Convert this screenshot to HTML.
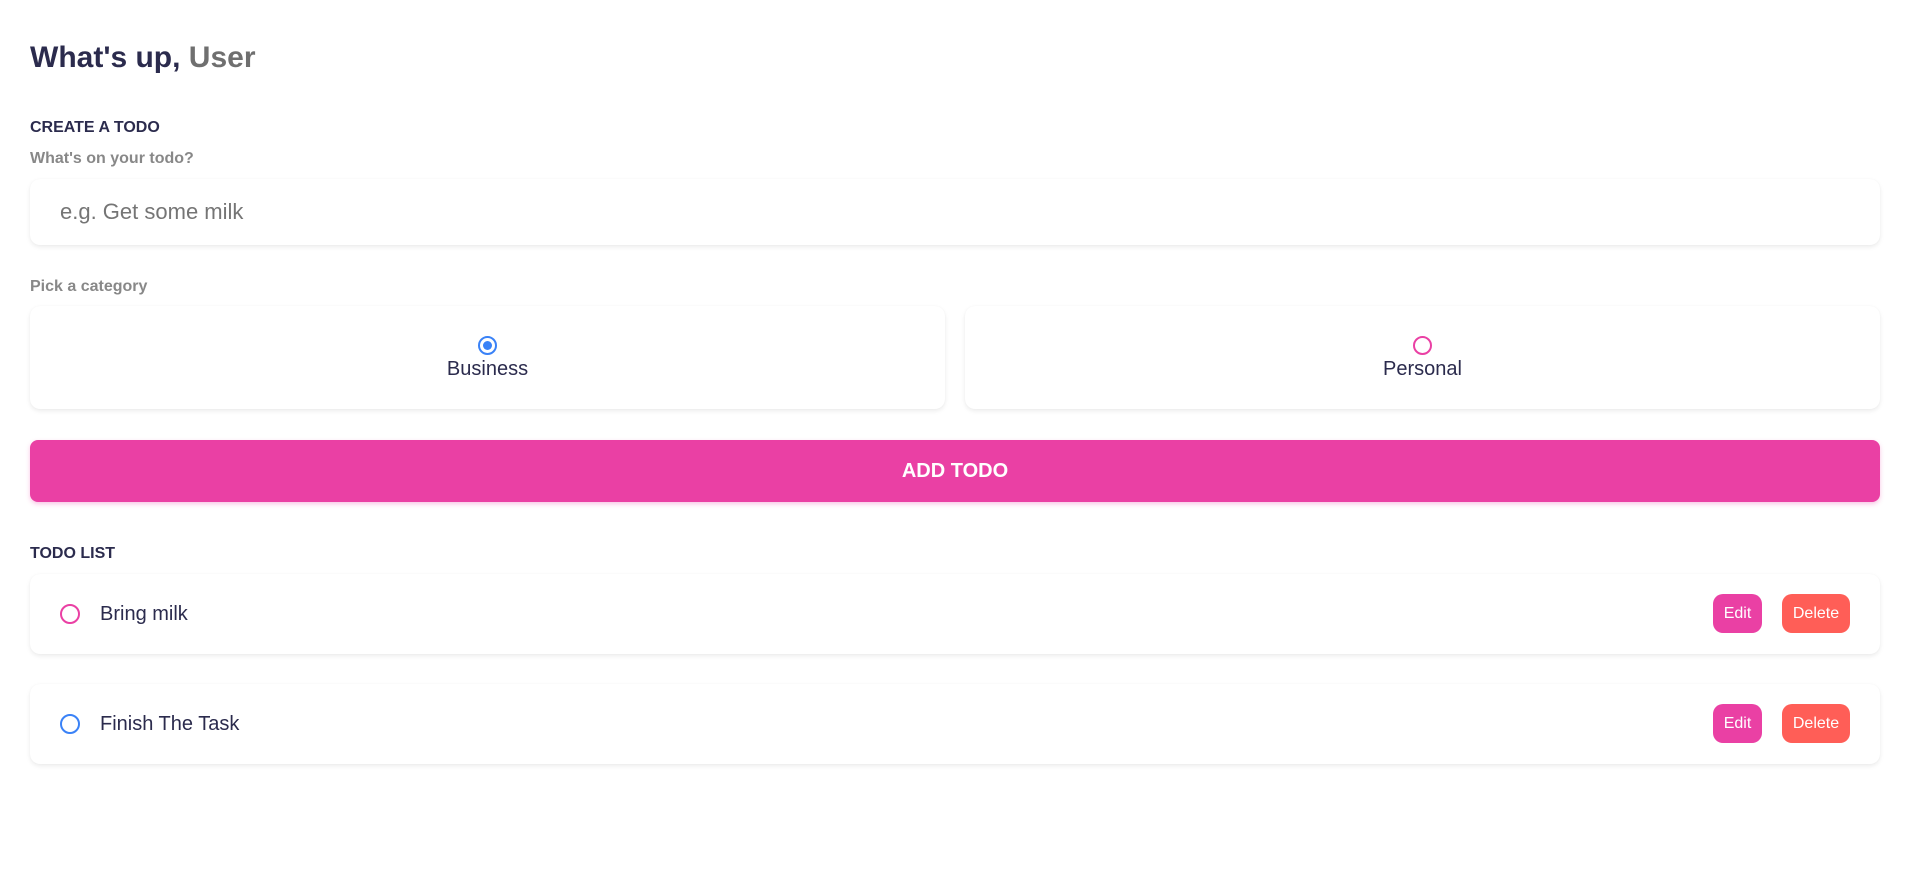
<!DOCTYPE html>
<html><head><meta charset="utf-8"><style>
*{box-sizing:border-box;margin:0;padding:0}
body{width:1910px;height:880px;background:#fff;font-family:"Liberation Sans",sans-serif;color:#2b2b4d;position:relative;overflow:hidden}
.a{position:absolute}
.card{position:absolute;background:#fff;border-radius:10px;box-shadow:0 2px 5px rgba(0,0,0,0.08),0 0 1px rgba(0,0,0,0.05)}
h1{position:absolute;left:30px;top:41px;font-size:30px;font-weight:bold;color:#2b2b4d}
h1 span{color:#6f6f6f;font-weight:bold}
.h{font-size:16px;font-weight:bold;color:#2b2b4d}
.l{font-size:16px;font-weight:bold;color:#888}
.btn{position:absolute;color:#fff;font-size:16px;border-radius:10px;text-align:center;line-height:39px;height:39px;top:20px}
</style></head><body>
<h1>What's up, <span>User</span></h1>
<div class="a h" style="left:30px;top:119px">CREATE A TODO</div>
<div class="a l" style="left:30px;top:150px">What's on your todo?</div>
<div class="card" style="left:30px;top:179px;width:1850px;height:66px"><div class="a" style="left:30px;top:20px;font-size:22px;color:#757575">e.g. Get some milk</div></div>
<div class="a l" style="left:30px;top:278px">Pick a category</div>
<div class="card" style="left:30px;top:306px;width:915px;height:103px">
 <div class="a" style="left:448px;top:30px;width:19px;height:19px;border:2px solid #3a82f7;border-radius:50%"><div style="margin:3px;width:9px;height:9px;border-radius:50%;background:#3a82f7"></div></div>
 <div class="a" style="left:0;width:915px;text-align:center;top:52px;font-size:20px;color:#2b2b4d">Business</div>
</div>
<div class="card" style="left:965px;top:306px;width:915px;height:103px">
 <div class="a" style="left:448px;top:30px;width:19px;height:19px;border:2px solid #ea40a4;border-radius:50%"></div>
 <div class="a" style="left:0;width:915px;text-align:center;top:52px;font-size:20px;color:#2b2b4d">Personal</div>
</div>
<div class="a" style="left:30px;top:440px;width:1850px;height:62px;background:#ea40a4;border-radius:8px;color:#fff;font-weight:bold;font-size:20px;text-align:center;line-height:62px;box-shadow:0 2px 5px rgba(234,64,164,0.3)">ADD TODO</div>
<div class="a h" style="left:30px;top:545px">TODO LIST</div>
<div class="card" style="left:30px;top:574px;width:1850px;height:80px">
 <div class="a" style="left:30px;top:30px;width:20px;height:20px;border:2px solid #ea40a4;border-radius:50%"></div>
 <div class="a" style="left:70px;top:29px;font-size:20px">Bring milk</div>
 <div class="btn" style="left:1683px;width:49px;background:#ea40a4">Edit</div>
 <div class="btn" style="left:1752px;width:68px;background:#ff5e57">Delete</div>
</div>
<div class="card" style="left:30px;top:684px;width:1850px;height:80px">
 <div class="a" style="left:30px;top:30px;width:20px;height:20px;border:2px solid #3a82f7;border-radius:50%"></div>
 <div class="a" style="left:70px;top:29px;font-size:20px">Finish The Task</div>
 <div class="btn" style="left:1683px;width:49px;background:#ea40a4">Edit</div>
 <div class="btn" style="left:1752px;width:68px;background:#ff5e57">Delete</div>
</div>
</body></html>
